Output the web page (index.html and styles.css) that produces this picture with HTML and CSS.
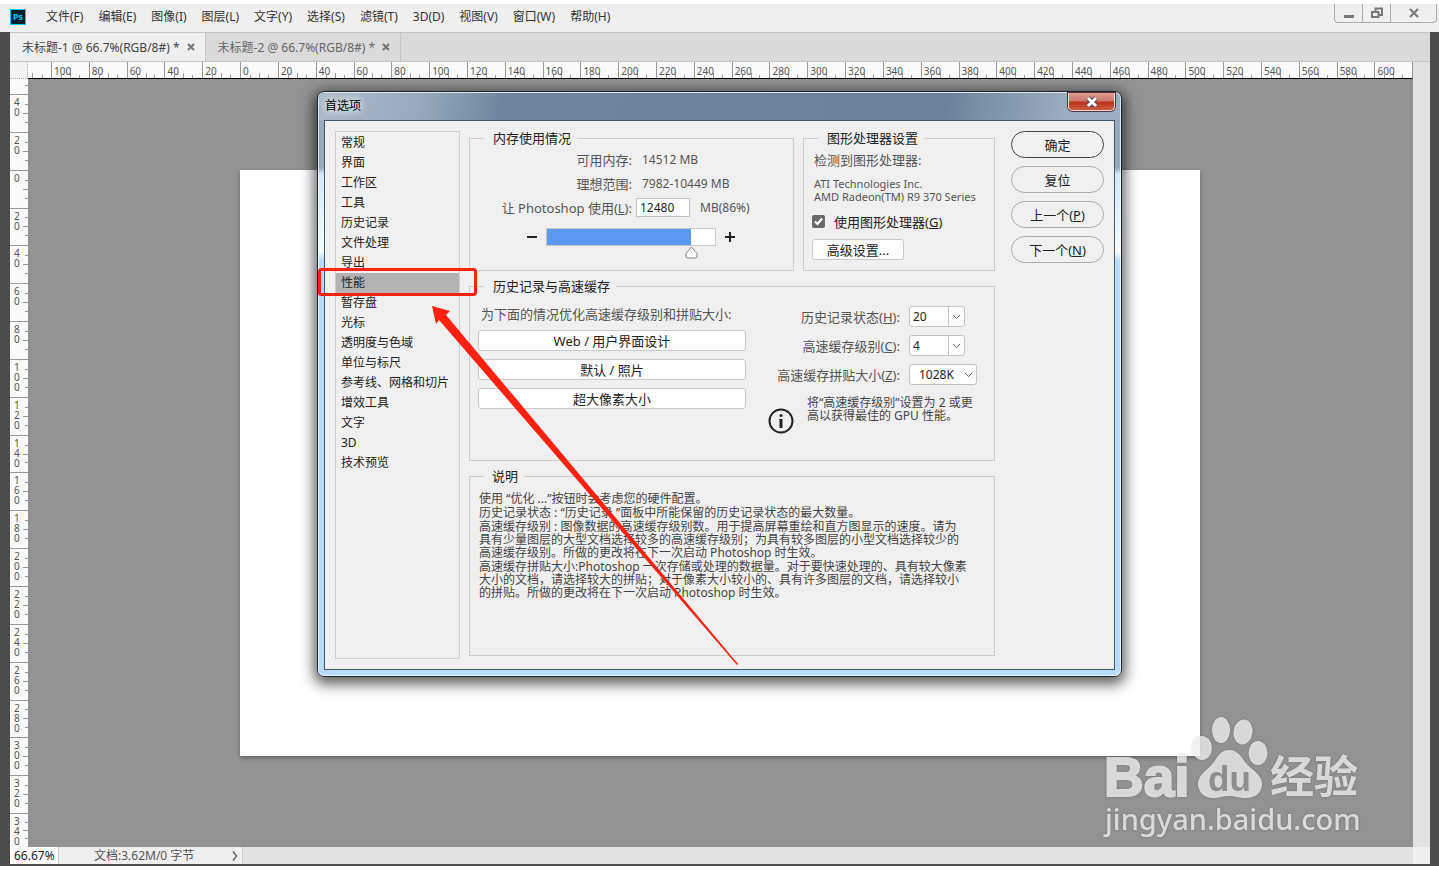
FILE: index.html
```html
<!DOCTYPE html>
<html lang="zh">
<head>
<meta charset="UTF-8">
<meta name="viewport" content="width=device-width, initial-scale=1.0">
<title>首选项</title>
<link rel="stylesheet" href="styles.css">
</head>
<body>
<header class="menu-bar">
<svg class="logo" width="16" height="16" viewBox="0 0 16 16">
<rect x="0.5" y="0.5" width="15" height="15" fill="#001e2b" stroke="#00c8ff"/>
<text x="8" y="11" text-anchor="middle" font-size="9" font-weight="bold" fill="#00c8ff">Ps</text>
</svg>
<nav class="menu">
<button>文件(F)</button>
<button>编辑(E)</button>
<button>图像(I)</button>
<button>图层(L)</button>
<button>文字(Y)</button>
<button>选择(S)</button>
<button>滤镜(T)</button>
<button>3D(D)</button>
<button>视图(V)</button>
<button>窗口(W)</button>
<button>帮助(H)</button>
</nav>
<div class="window-controls">
<button aria-label="最小化"><svg width="12" height="12"><path d="M1 9.5h10" stroke="#777" stroke-width="3"/></svg></button>
<button aria-label="还原"><svg width="12" height="12" fill="none" stroke="#777" stroke-width="2"><path d="M4.500 4V1.500H11V8H8M1 5h6.500v5H1z"/></svg></button>
<button class="wide" aria-label="关闭"><svg width="12" height="12"><path d="M2 2l8 8M10 2l-8 8" stroke="#777" stroke-width="2"/></svg></button>
</div>
</header>

<main class="window">
<div class="tabs">
<div class="tab active"><span>未标题-1 @ 66.7%(RGB/8#) *</span><button aria-label="关闭"><svg width="8" height="8"><path d="M1 1l6 6M7 1L1 7" stroke="#777" stroke-width="2"/></svg></button></div>
<div class="tab"><span>未标题-2 @ 66.7%(RGB/8#) *</span><button aria-label="关闭"><svg width="8" height="8"><path d="M1 1l6 6M7 1L1 7" stroke="#777" stroke-width="2"/></svg></button></div>
</div>
<div class="workspace">
<div class="ruler-corner"></div>
<div class="ruler ruler-h" id="rulerH"><div class="cell first"></div></div>
<div class="scroll-v"></div>
<div class="ruler ruler-v" id="rulerV"><div class="cell first"></div></div>
<div class="stage">
<div class="canvas"></div>
<svg class="watermark" width="265" height="130" viewBox="0 0 265 130">
<g fill="#fff" opacity="0.72">
<text class="wm-latin" x="4" y="84" font-size="55" stroke="#fff" stroke-width="2">Bai</text>
<ellipse cx="102" cy="36" rx="10" ry="12"/>
<ellipse cx="121" cy="18" rx="9" ry="13"/>
<ellipse cx="143" cy="20" rx="9.500" ry="12.500" transform="rotate(8 143 20)"/>
<ellipse cx="158" cy="41" rx="9.500" ry="12"/>
<path d="M129 38c8 0 12 6 16 12c6 8 17 12 17 22c0 9-7 14-16 14c-7 0-11-2-17-2s-10 2-16 2c-9 0-15-6-15-14c0-10 10-14 16-22c4-6 7-12 15-12z"/>
<text class="wm-cjk" x="170" y="81" font-size="44">经验</text>
<text class="wm-url" x="5" y="118" font-size="29">jingyan.baidu.com</text>
</g>
<text class="wm-latin" x="108" y="79" font-size="35" fill="#8e8e8e">du</text>
</svg>
</div>
</div>
<footer class="status">
<input class="zoom" type="text" value="66.67%" aria-label="缩放">
<div class="doc-info"><span>文档:3.62M/0 字节</span><svg width="6" height="10" fill="none" stroke="#666" stroke-width="1.500"><path d="M1 0.500l3.500 4.500L1 9.500"/></svg></div>
<div class="scroll-h"></div>
<div class="grip"></div>
</footer>
</main>

<section class="dialog">
<div class="title-bar">
<span>首选项</span>
<button class="dialog-close" aria-label="关闭"><svg width="14" height="12" viewBox="0 0 14 12"><path d="M3 2l8 8M11 2l-8 8" stroke="#4b4b5a" stroke-width="5"/><path d="M3 2l8 8M11 2l-8 8" stroke="#fff" stroke-width="3"/></svg></button>
</div>
<div class="dialog-body">
<ul class="sections">
<li>常规</li>
<li>界面</li>
<li>工作区</li>
<li>工具</li>
<li>历史记录</li>
<li>文件处理</li>
<li>导出</li>
<li class="selected">性能</li>
<li>暂存盘</li>
<li>光标</li>
<li>透明度与色域</li>
<li>单位与标尺</li>
<li>参考线、网格和切片</li>
<li>增效工具</li>
<li>文字</li>
<li>3D</li>
<li>技术预览</li>
</ul>

<div class="groups">
<div class="top-groups">
<fieldset class="memory">
<legend>内存使用情况</legend>
<div class="row"><span class="name">可用内存:</span><span class="value">14512 MB</span></div>
<div class="row"><span class="name">理想范围:</span><span class="value">7982-10449 MB</span></div>
<div class="row"><label class="name" for="memInput">让 Photoshop 使用(<u>L</u>):</label><input id="memInput" type="text" value="12480"><span class="value">MB(86%)</span></div>
<div class="slider-row">
<button aria-label="减少"><svg width="12" height="12"><path d="M1 6h10" stroke="#222" stroke-width="2"/></svg></button>
<div class="slider" style="--level: 86%"><input type="range" min="0" max="100" value="86" aria-label="内存使用量"></div>
<button aria-label="增加"><svg width="12" height="12"><path d="M1 6h10M6 1v10" stroke="#222" stroke-width="2"/></svg></button>
</div>
</fieldset>
<fieldset class="gpu">
<legend>图形处理器设置</legend>
<p class="detected">检测到图形处理器:</p>
<p class="card-name">ATI Technologies Inc.<br>AMD Radeon(TM) R9 370 Series</p>
<label class="check"><input type="checkbox" checked><span>使用图形处理器(<u>G</u>)</span></label>
<button class="box-button">高级设置...</button>
</fieldset>
</div>

<fieldset class="history">
<legend>历史记录与高速缓存</legend>
<div class="presets">
<p>为下面的情况优化高速缓存级别和拼贴大小:</p>
<button class="box-button">Web / 用户界面设计</button>
<button class="box-button">默认 / 照片</button>
<button class="box-button">超大像素大小</button>
</div>
<div class="cache">
<div class="field"><label for="states">历史记录状态(<u>H</u>):</label><select id="states" class="combo"><option>20</option></select></div>
<div class="field"><label for="levels">高速缓存级别(<u>C</u>):</label><select id="levels" class="combo"><option>4</option></select></div>
<div class="field"><label for="tile">高速缓存拼贴大小(<u>Z</u>):</label><select id="tile" class="tile"><option>1028K</option></select></div>
<div class="hint">
<svg width="26" height="26" viewBox="0 0 26 26"><circle cx="13" cy="13" r="11.500" fill="none" stroke="#222" stroke-width="2"/><circle cx="13" cy="7.500" r="1.500" fill="#222"/><path d="M11 11h3.500v9h-3v-8h-0.500z" fill="#222"/></svg>
<p>将“高速缓存级别”设置为 2 或更<br>高以获得最佳的 GPU 性能。</p>
</div>
</div>
</fieldset>

<fieldset class="notes">
<legend>说明</legend>
<p>使用 “优化 ...”按钮时会考虑您的硬件配置。</p>
<p>历史记录状态 : “历史记录 ”面板中所能保留的历史记录状态的最大数量。</p>
<p>高速缓存级别 : 图像数据的高速缓存级别数。用于提高屏幕重绘和直方图显示的速度。请为<br>具有少量图层的大型文档选择较多的高速缓存级别；为具有较多图层的小型文档选择较少的<br>高速缓存级别。所做的更改将在下一次启动 Photoshop 时生效。</p>
<p>高速缓存拼贴大小:Photoshop 一次存储或处理的数据量。对于要快速处理的、具有较大像素<br>大小的文档，请选择较大的拼贴；对于像素大小较小的、具有许多图层的文档，请选择较小<br>的拼贴。所做的更改将在下一次启动 Photoshop 时生效。</p>
</fieldset>
</div>

<div class="actions">
<button class="primary">确定</button>
<button>复位</button>
<button>上一个(<u>P</u>)</button>
<button>下一个(<u>N</u>)</button>
</div>
</div>

<svg class="marks" width="430" height="410" viewBox="0 0 430 410">
<rect x="1.500" y="9.500" width="156" height="25" rx="2" fill="none" stroke="#ff2010" stroke-width="3"/>
<path d="M114 46L132 51L128 55L420 404L419 405L121 60L118 64z" fill="#ff2010"/>
</svg>
</section>

<script>
// 生成标尺刻度
function buildRuler(id, from, to) {
    const ruler = document.getElementById(id);
    for (let n = from; n <= to; n += 20) {
        const cell = document.createElement('div');
        cell.className = 'cell';
        cell.textContent = Math.abs(n);
        ruler.appendChild(cell);
    }
}

buildRuler('rulerH', -100, 600);
buildRuler('rulerV', -40, 340);
</script>
</body>
</html>
```

FILE: styles.css
```css
* {
    box-sizing: border-box;
}
body {
    position: relative;
    display: flex;
    flex-direction: column;
    min-height: 100vh;
    margin: 0;
    padding: 4px 0;
    background-color: #fff;
    color: #333;
    font-family: "Noto Sans", "Noto Sans CJK SC", sans-serif;
    font-size: 12px;
}
button, input, select {
    margin: 0;
    padding: 0;
    border: none;
    background: none;
    color: inherit;
    font: inherit;
}
svg {
    display: block;
}
p {
    margin: 0;
}
.menu-bar {
    display: flex;
    height: 28px;
    padding-left: 10px;
    background-color: #efefef;
}
.logo {
    margin-top: 5px;
}
.menu {
    display: flex;
    gap: 15px;
    height: 24px;
    margin-left: 20px;
    white-space: nowrap;
}
.window-controls {
    display: flex;
    height: 19px;
    margin: 0 2px 0 auto;
    border: 1px solid #aaa;
    border-top: none;
    border-radius: 0 0 4px 4px;
}
.window-controls button {
    display: flex;
    align-items: center;
    justify-content: center;
    width: 28px;
    border-right: 1px solid #aaa;
}
.window-controls .wide {
    width: 45px;
    border-right: none;
}
.window {
    display: flex;
    flex-direction: column;
    flex: 1;
    border: solid #4c4c4c;
    border-width: 0 9px 2px 10px;
}
.tabs {
    display: flex;
    height: 30px;
    border-top: 1px solid #c6c6c6;
    border-bottom: 1px solid #c6c6c6;
    background-color: #dadada;
}
.tab {
    display: flex;
    align-items: center;
    gap: 7px;
    padding: 0 10px 0 12px;
    border-right: 1px solid #c6c6c6;
    color: #666;
    white-space: nowrap;
}
.tab.active {
    background-color: #efefef;
    color: #444;
}
.workspace {
    display: grid;
    grid-template-columns: 18px 1fr 17px;
    grid-template-rows: 17px 1fr;
    flex: 1;
}
.ruler-corner {
    border-right: 1px dotted #aaa;
    border-bottom: 1px dotted #aaa;
    background-color: #f3f3f3;
}
.ruler {
    display: flex;
    background-color: #fafafa;
    color: #555;
    font-size: 10px;
}
.cell {
    flex: 1;
    min-width: 0;
    min-height: 0;
    background-image: linear-gradient(#999, #999), linear-gradient(#999, #999), linear-gradient(#999, #999);
    background-repeat: no-repeat;
}
.ruler-h {
    border-bottom: 1px solid #000;
    border-right: 1px solid #999;
    line-height: 19px;
}
.ruler-h .cell {
    padding-left: 2px;
    border-left: 1px solid #999;
    background-size: 1px 3px, 1px 5px, 1px 3px;
    background-position: 25% 100%, 50% 100%, 75% 100%;
}
.ruler-h .first {
    flex: 0 0 23px;
    border-left: none;
    background-position: 4px 100%, 4px 100%, 14px 100%;
}
.ruler-v {
    flex-direction: column;
    overflow: hidden;
    line-height: 10px;
}
.ruler-v .cell {
    padding: 2px 11px 0 4px;
    border-top: 1px solid #999;
    background-size: 3px 1px, 5px 1px, 3px 1px;
    background-position: 100% 25%, 100% 50%, 100% 75%;
    word-break: break-all;
}
.ruler-v .first {
    flex: 0 0 15px;
    border-top: none;
    background-size: 3px 1px;
    background-position: 100% 6px;
}
.ruler-v .cell:last-child {
    flex: 0 0 34px;
}
.scroll-v {
    grid-column: 3;
    grid-row: 1 / 3;
    background-color: #e2e2e2;
}
.stage {
    position: relative;
    grid-column: 2;
    grid-row: 2;
    display: flex;
    align-items: center;
    justify-content: center;
    padding-right: 1px;
    background-color: #929292;
}
.canvas {
    width: 960px;
    height: 586px;
    background-color: #fff;
    box-shadow: 0 2px 4px rgba(0,0,0,0.3);
}
.watermark {
    position: absolute;
    right: 48px;
    bottom: 5px;
    filter: drop-shadow(0 0 1px rgba(0,0,0,0.3));
}
.wm-latin {
    font-family: "Liberation Sans", sans-serif;
    font-weight: bold;
}
.wm-cjk {
    font-family: "Noto Sans CJK SC", sans-serif;
    font-weight: bold;
}
.wm-url {
    font-family: "Noto Sans", sans-serif;
    font-weight: 500;
}
.status {
    display: flex;
    height: 17px;
    background-color: #e2e2e2;
    line-height: 16px;
}
.zoom {
    width: 48px;
    padding-left: 4px;
    background-color: #fff;
    color: #222;
}
.doc-info {
    display: flex;
    align-items: center;
    justify-content: space-between;
    width: 185px;
    padding: 0 4px 0 35px;
    border: solid #ccc;
    border-width: 0 1px;
    background-color: #efefef;
    color: #555;
}
.scroll-h {
    flex: 1;
}
.grip {
    width: 17px;
    background-color: #efefef;
}

/* 首选项对话框 */
.dialog {
    position: absolute;
    top: 91px;
    left: 0;
    right: 0;
    width: 805px;
    margin: 0 auto;
    padding: 0 6px 6px;
    border: 1px solid #1c2733;
    border-radius: 7px;
    background: linear-gradient(#9aabbd 76px, #d4e8fb 82px, #f4faff 160px, #b9dcfe 168px);
    box-shadow: inset 0 0 0 1px rgba(255,255,255,0.7), 0 4px 14px 3px rgba(0,0,0,0.65);
}
.title-bar {
    display: flex;
    justify-content: space-between;
    height: 27px;
    margin: 1px -5px 0;
    padding: 0 5px 0 6px;
    border-radius: 5px 5px 0 0;
    background: linear-gradient(100deg, #adbac8 0, #98a9bb 100px, #71869d 180px, #6d829a 620px, #9dadbe 740px);
    color: #000;
    line-height: 25px;
}
.title-bar span {
    text-shadow: 0 0 6px #fff, 0 0 10px #fff;
}
.dialog-close {
    display: flex;
    align-items: center;
    justify-content: center;
    width: 47px;
    height: 18px;
    border: 1px solid #f0dcd8;
    border-top: none;
    border-radius: 0 0 5px 5px;
    background: linear-gradient(#dba195, #ce7566 8px, #b8321c 9px, #d05c3c);
    box-shadow: 0 0 0 1px #5a3038;
}
.dialog-body {
    display: grid;
    grid-template-columns: 125px 1fr 93px;
    padding: 10px;
    border: 1px solid #45586c;
    background-color: #f0f0f0;
    font-size: 13px;
}
.sections {
    min-height: 528px;
    margin: 0;
    padding: 1px 0 0;
    border: 1px solid #d0d0d0;
    color: #222;
    font-size: 12px;
    line-height: 20px;
    list-style: none;
}
.sections li {
    padding-left: 5px;
}
.sections .selected {
    background-color: #b3b3b3;
}
.groups {
    display: flex;
    flex-direction: column;
    gap: 8px;
    margin: 0 16px 0 9px;
    padding-bottom: 3px;
    color: #555;
}
.top-groups {
    display: flex;
    gap: 9px;
    min-height: 140px;
}
fieldset {
    min-width: 0;
    margin: 0;
    padding: 0;
    border: 1px solid #cdcdcd;
}
legend {
    margin-left: 14px;
    padding: 0 6px 0 9px;
    color: #222;
    line-height: 15px;
}
.memory {
    flex: 1;
    padding-top: 1px;
}
.row {
    display: flex;
    align-items: center;
    height: 24px;
    font-size: 12px;
}
.name {
    width: 162px;
    font-size: 13px;
    text-align: right;
    white-space: nowrap;
}
.value {
    margin-left: 10px;
}
#memInput {
    width: 54px;
    height: 19px;
    margin-left: 4px;
    padding-left: 3px;
    border: 1px solid #c4c4c4;
    background-color: #fff;
    color: #222;
}
.slider-row {
    display: flex;
    align-items: center;
    gap: 8px;
    height: 35px;
    padding-left: 56px;
}
.slider {
    width: 170px;
    height: 18px;
    border: 1px solid #c8c8c8;
    background: linear-gradient(to right, #5b99f4 var(--level), #fff var(--level));
}
.slider input {
    display: block;
    width: 182px;
    height: 30px;
    margin: 0 -7px;
    appearance: none;
}
.slider input::-webkit-slider-thumb {
    width: 13px;
    height: 13px;
    margin-top: 17px;
    appearance: none;
    background: url("data:image/svg+xml,%3Csvg xmlns='http://www.w3.org/2000/svg' width='13' height='13'%3E%3Cpath d='M6.5 1L12 7.500V10Q12 12 10 12H3Q1 12 1 10V7.500Z' fill='white' stroke='%23888'/%3E%3C/svg%3E");
}
.gpu {
    width: 192px;
    padding: 2px 0 0 8px;
}
.gpu legend {
    margin-left: 6px;
}
.detected {
    padding-left: 2px;
    line-height: 24px;
}
.card-name {
    padding: 5px 0 6px 2px;
    font-size: 11px;
    line-height: 13px;
    white-space: nowrap;
}
.check {
    display: flex;
    align-items: center;
    gap: 9px;
    height: 24px;
    color: #222;
}
.check input {
    width: 13px;
    height: 13px;
    border-radius: 2px;
    appearance: none;
    background: #6a6a6a url("data:image/svg+xml,%3Csvg xmlns='http://www.w3.org/2000/svg' width='13' height='13'%3E%3Cpath d='M3 6.500L5.500 9L10 3.500' fill='none' stroke='white' stroke-width='2'/%3E%3C/svg%3E");
}
.box-button {
    height: 21px;
    border: 1px solid #cacaca;
    border-radius: 3px;
    background-color: #fdfdfd;
    color: #222;
    line-height: 18px;
}
.gpu .box-button {
    width: 92px;
    margin-top: 6px;
}
.history {
    display: flex;
    min-height: 182px;
}
.presets {
    display: flex;
    flex-direction: column;
    gap: 8px;
    width: 268px;
    margin: 12px 22px 0 8px;
}
.presets p {
    padding-left: 3px;
    line-height: 16px;
    white-space: nowrap;
}
.cache {
    display: flex;
    flex-direction: column;
    gap: 8px;
    margin-top: 12px;
}
.field {
    display: flex;
    align-items: center;
    height: 21px;
}
.field label {
    width: 132px;
    margin-right: 9px;
    text-align: right;
    white-space: nowrap;
}
select {
    height: 21px;
    border: 1px solid #c4c4c4;
    border-radius: 3px;
    appearance: none;
    background: #fdfdfd url("data:image/svg+xml,%3Csvg xmlns='http://www.w3.org/2000/svg' width='9' height='6'%3E%3Cpath d='M1 1L4.500 4.500L8 1' fill='none' stroke='%23666'/%3E%3C/svg%3E") no-repeat right 3px center;
    color: #222;
    font-size: 12px;
}
.combo {
    width: 56px;
    padding-left: 3px;
    background-image: url("data:image/svg+xml,%3Csvg xmlns='http://www.w3.org/2000/svg' width='16' height='19'%3E%3Cpath d='M0.500 0V19' stroke='%23c4c4c4'/%3E%3Cpath d='M5 8L8.500 11.500L12 8' fill='none' stroke='%23666'/%3E%3C/svg%3E");
    background-position: right 0 center;
}
.tile {
    width: 68px;
    padding-left: 9px;
}
.hint {
    display: flex;
    gap: 13px;
    color: #444;
    font-size: 12px;
    line-height: 13px;
    white-space: nowrap;
}
.hint svg {
    margin-top: 15px;
}
.hint p {
    padding-top: 3px;
}
.notes {
    flex: 1;
    padding: 8px 0 0 9px;
    color: #444;
    font-size: 12px;
    line-height: 13px;
    white-space: nowrap;
}
.notes legend {
    margin-left: 5px;
    padding-left: 8px;
    font-size: 13px;
    line-height: 15px;
}
.notes p {
    margin-bottom: 1px;
}
.actions {
    display: flex;
    flex-direction: column;
    gap: 8px;
}
.actions button {
    height: 27px;
    border: 1px solid #aaa;
    border-radius: 14px;
    color: #222;
    line-height: 24px;
}
.actions .primary {
    border-color: #444;
}
/* 标注框和箭头 */
.marks {
    position: absolute;
    top: 168px;
    left: 0;
    pointer-events: none;
}
```
